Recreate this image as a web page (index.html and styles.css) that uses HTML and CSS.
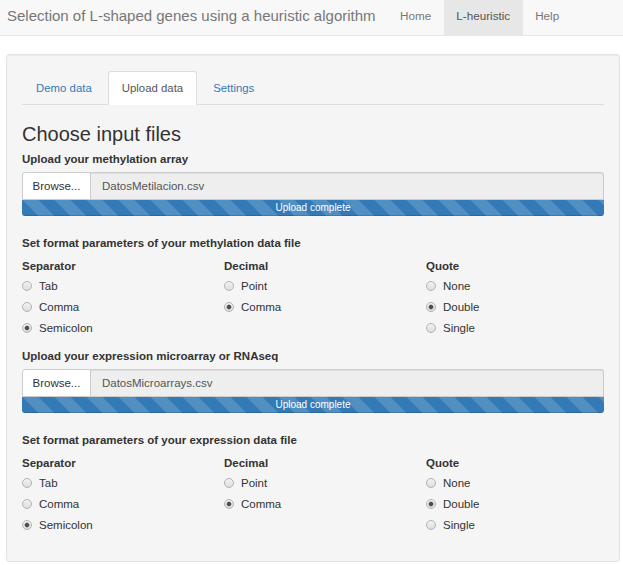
FILE: index.html
```html
<!DOCTYPE html>
<html lang="en">
<head>
<meta charset="utf-8">
<title>L-heuristic</title>
<link rel="stylesheet" href="styles.css">
</head>
<body>
<nav class="navbar">
  <span class="brand">Selection of L-shaped genes using a heuristic algorithm</span>
  <ul class="nav">
    <li><a>Home</a></li>
    <li class="active"><a>L-heuristic</a></li>
    <li><a>Help</a></li>
  </ul>
</nav>
<div class="page">
  <div class="well">
    <ul class="tabs">
      <li><a>Demo data</a></li>
      <li class="active"><a>Upload data</a></li>
      <li><a>Settings</a></li>
    </ul>
    <div class="tab-content">
      <h3>Choose input files</h3>

      <section class="block">
        <label class="field-label">Upload your methylation array</label>
        <div class="input-group"><span class="btn">Browse...</span><span class="file-name">DatosMetilacion.csv</span></div>
        <div class="progress"><div class="bar">Upload complete</div></div>
        <p class="subhead">Set format parameters of your methylation data file</p>
        <div class="row">
          <div class="col">
            <div class="col-label">Separator</div>
            <div class="radios">
              <label class="radio"><input type="radio" name="sep1">Tab</label>
              <label class="radio"><input type="radio" name="sep1">Comma</label>
              <label class="radio"><input type="radio" name="sep1" checked>Semicolon</label>
            </div>
          </div>
          <div class="col">
            <div class="col-label">Decimal</div>
            <div class="radios">
              <label class="radio"><input type="radio" name="dec1">Point</label>
              <label class="radio"><input type="radio" name="dec1" checked>Comma</label>
            </div>
          </div>
          <div class="col">
            <div class="col-label">Quote</div>
            <div class="radios">
              <label class="radio"><input type="radio" name="quo1">None</label>
              <label class="radio"><input type="radio" name="quo1" checked>Double</label>
              <label class="radio"><input type="radio" name="quo1">Single</label>
            </div>
          </div>
        </div>
      </section>

      <section class="block">
        <label class="field-label">Upload your expression microarray or RNAseq</label>
        <div class="input-group"><span class="btn">Browse...</span><span class="file-name">DatosMicroarrays.csv</span></div>
        <div class="progress"><div class="bar">Upload complete</div></div>
        <p class="subhead">Set format parameters of your expression data file</p>
        <div class="row">
          <div class="col">
            <div class="col-label">Separator</div>
            <div class="radios">
              <label class="radio"><input type="radio" name="sep2">Tab</label>
              <label class="radio"><input type="radio" name="sep2">Comma</label>
              <label class="radio"><input type="radio" name="sep2" checked>Semicolon</label>
            </div>
          </div>
          <div class="col">
            <div class="col-label">Decimal</div>
            <div class="radios">
              <label class="radio"><input type="radio" name="dec2">Point</label>
              <label class="radio"><input type="radio" name="dec2" checked>Comma</label>
            </div>
          </div>
          <div class="col">
            <div class="col-label">Quote</div>
            <div class="radios">
              <label class="radio"><input type="radio" name="quo2">None</label>
              <label class="radio"><input type="radio" name="quo2" checked>Double</label>
              <label class="radio"><input type="radio" name="quo2">Single</label>
            </div>
          </div>
        </div>
      </section>
    </div>
  </div>
</div>
</body>
</html>
```
FILE: styles.css
```css
* { box-sizing: border-box; }

body {
  margin: 0;
  font-family: "Liberation Sans", Arial, sans-serif;
  font-size: 11.5px;
  line-height: 16px;
  color: #333;
  background: #fff;
}

/* navbar */
.navbar {
  height: 36px;
  background: #f8f8f8;
  border-bottom: 1px solid #e7e7e7;
  display: flex;
  align-items: flex-start;
}
.brand {
  font-size: 15px;
  line-height: 32px;
  color: #777;
  padding: 0 12px 0 7px;
  white-space: nowrap;
}
.nav {
  list-style: none;
  margin: 0;
  padding: 0;
  display: flex;
}
.nav a {
  display: block;
  height: 35px;
  padding: 0 12.5px;
  font-size: 11.7px;
  line-height: 32px;
  color: #777;
}
.nav .active a {
  background: #e7e7e7;
  color: #555;
}

/* page + well */
.page {
  padding: 18px 3px 0 6px;
}
.well {
  background: #f5f5f5;
  border: 1px solid #e3e3e3;
  border-radius: 3px;
  box-shadow: inset 0 1px 1px rgba(0, 0, 0, .05);
  padding: 16px 15px 16px;
}

/* tabs */
.tabs {
  list-style: none;
  margin: 0;
  padding: 0;
  display: flex;
  border-bottom: 1px solid #ddd;
}
.tabs li {
  margin-bottom: -1px;
}
.tabs a {
  display: block;
  margin-right: 2px;
  padding: 8px 13px;
  font-size: 11.4px;
  line-height: 16px;
  border: 1px solid transparent;
  border-radius: 3px 3px 0 0;
  color: #337ab7;
}
.tabs .active a {
  background: #fff;
  border-color: #ddd #ddd transparent;
  color: #555;
}

h3 {
  margin: 18px 0 6px;
  font-size: 20px;
  line-height: 22px;
  font-weight: normal;
  color: #333;
}

/* upload block */
.block {
  margin-bottom: 12.4px;
}
.field-label {
  display: block;
  font-weight: bold;
  margin-bottom: 5px;
}
.input-group {
  display: flex;
  height: 28px;
}
.btn {
  background: #fff;
  border: 1px solid #ccc;
  border-radius: 3px 0 0 0;
  padding: 0 9.5px;
  line-height: 26px;
  color: #333;
  white-space: nowrap;
}
.file-name {
  flex: 1;
  background: #eee;
  border: 1px solid #ccc;
  border-left: 0;
  border-radius: 0 3px 0 0;
  box-shadow: inset 0 1px 1px rgba(0, 0, 0, .075);
  padding: 0 11px;
  line-height: 26px;
  color: #555;
}
.progress {
  height: 16px;
  background: #f5f5f5;
  border-radius: 0 0 3px 3px;
  overflow: hidden;
  margin-bottom: 18.7px;
}
.bar {
  height: 100%;
  background-color: #337ab7;
  background-image: linear-gradient(45deg,
    rgba(255, 255, 255, .15) 25%, transparent 25%,
    transparent 50%, rgba(255, 255, 255, .15) 50%,
    rgba(255, 255, 255, .15) 75%, transparent 75%, transparent);
  background-size: 32px 32px;
  box-shadow: inset 0 -1px 0 rgba(0, 0, 0, .15);
  color: #fff;
  font-size: 10px;
  line-height: 16px;
  text-align: center;
}

.subhead {
  margin: 0 0 7.3px;
  font-weight: bold;
}

/* radio columns */
.row {
  display: grid;
  grid-template-columns: repeat(3, 1fr);
  margin: 0 -12px;
}
.col {
  padding: 0 12px;
}
.col-label {
  font-weight: bold;
  margin-bottom: 4px;
}
.radios {
  display: flex;
  flex-direction: column;
  gap: 4.8px;
}
.radio {
  display: flex;
  align-items: center;
  height: 16px;
}
.radio input {
  -webkit-appearance: none;
  appearance: none;
  width: 10px;
  height: 10px;
  margin: 0 7px 0 0;
  border: 1px solid #b2b2b2;
  border-radius: 50%;
  background: linear-gradient(#f2f2f2, #dedede);
  flex: none;
}
.radio input:checked {
  background: radial-gradient(circle, #4d4d4d 0, #4d4d4d 1.6px, #9a9a9a 2.3px, transparent 2.8px),
              linear-gradient(#f2f2f2, #dedede);
}
```
